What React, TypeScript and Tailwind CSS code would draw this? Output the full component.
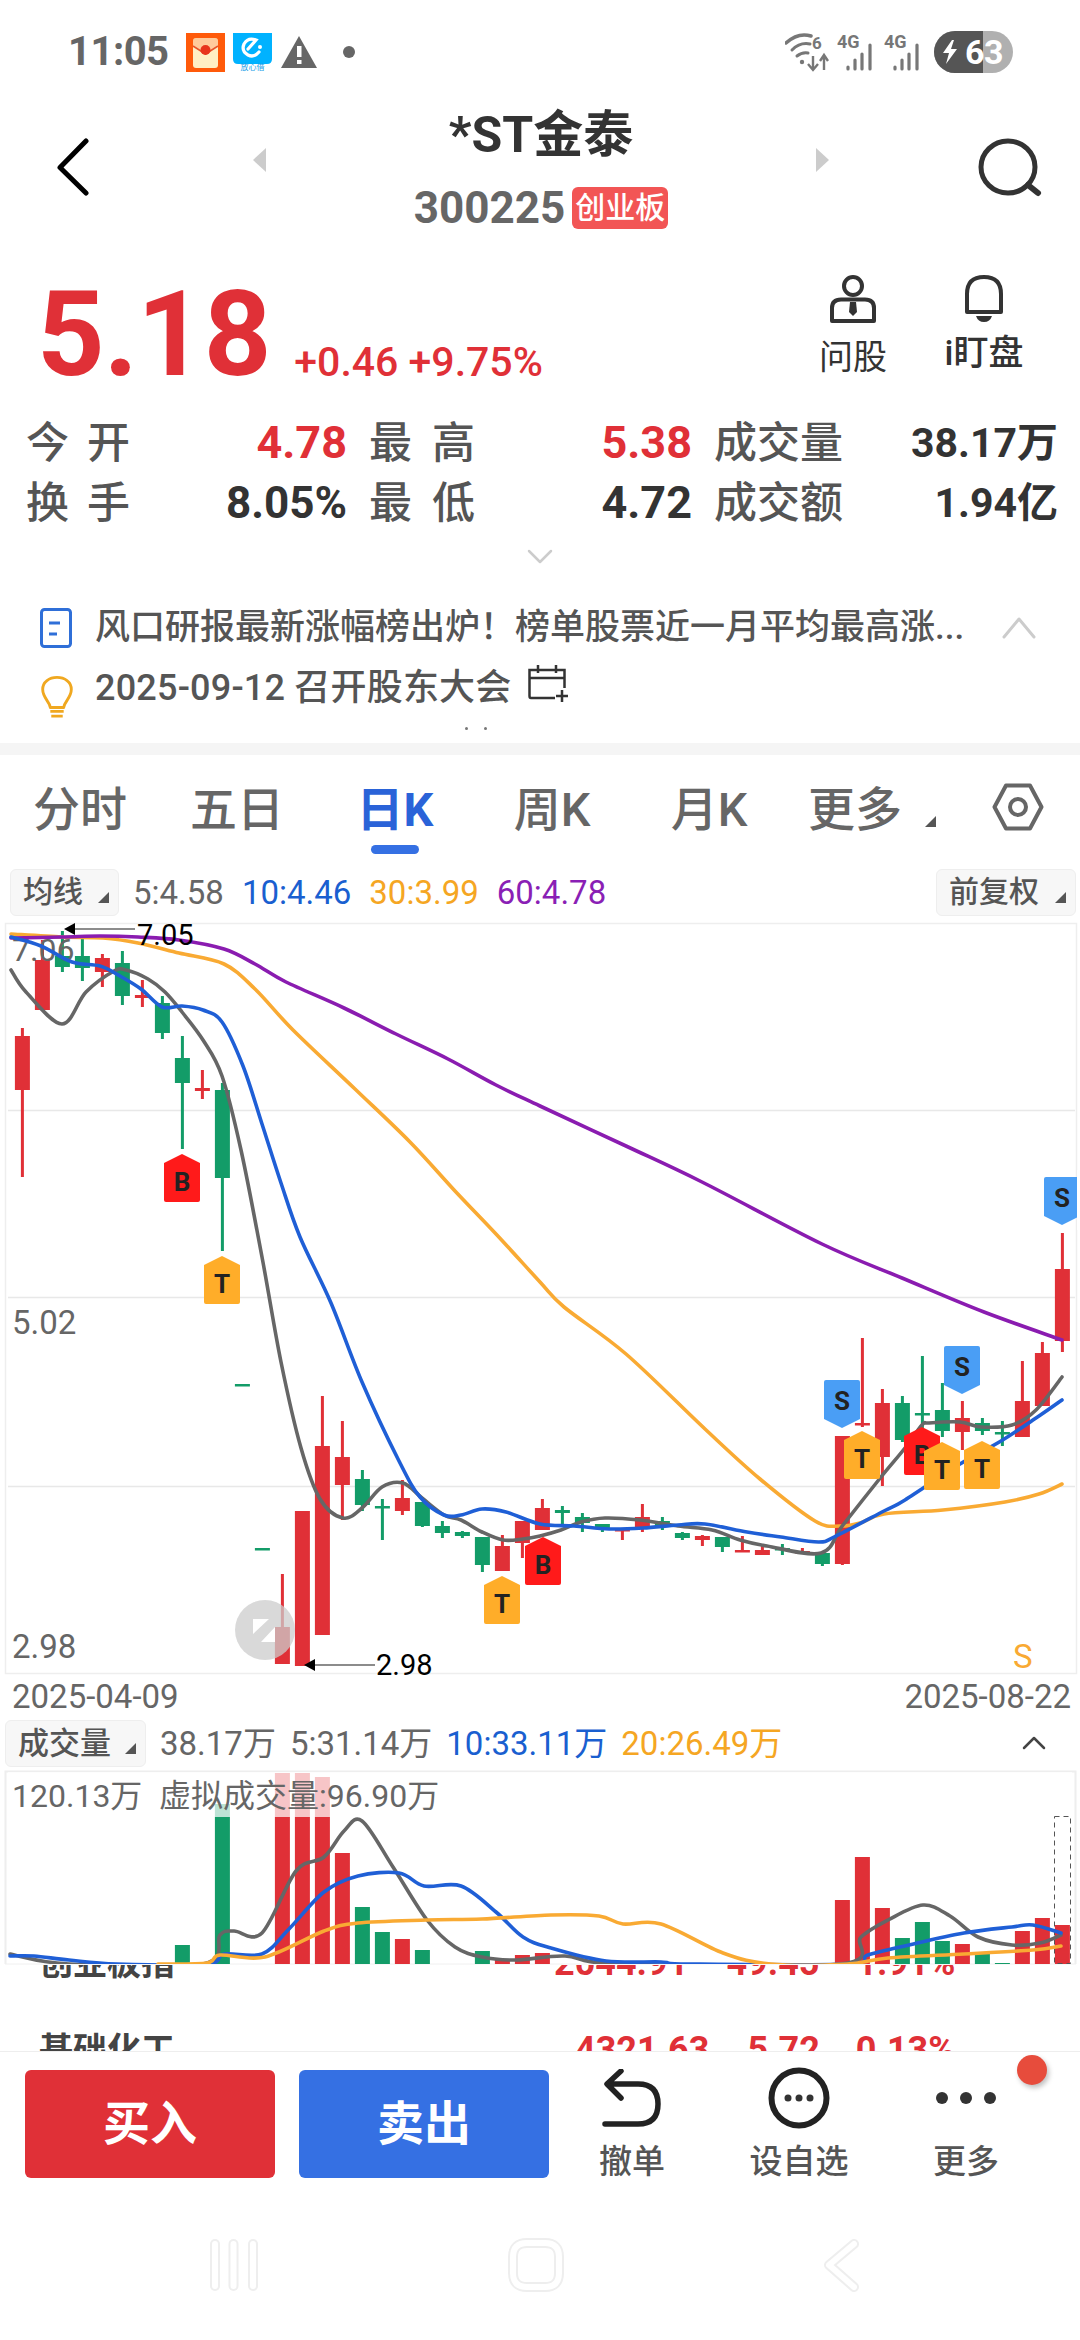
import React from "react";

type Pt = [number, number];
const smooth = (p: Pt[]) => {
  let d = `M${p[0][0]} ${p[0][1]}`;
  for (let i = 0; i < p.length - 1; i++) {
    const a = p[Math.max(i - 1, 0)], b = p[i], c = p[i + 1], e = p[Math.min(i + 2, p.length - 1)];
    const k = 6;
    d += ` C${(b[0] + (c[0] - a[0]) / k).toFixed(1)} ${(b[1] + (c[1] - a[1]) / k).toFixed(1)} ${(c[0] - (e[0] - b[0]) / k).toFixed(1)} ${(c[1] - (e[1] - b[1]) / k).toFixed(1)} ${c[0]} ${c[1]}`;
  }
  return d;
};

const RED = "#e03037", GREEN = "#139c68", BLUE = "#1f5fd6", ORANGE = "#f9aa33", PURPLE = "#8a1cb0", GRAY = "#666666";

const candles: [number, number, number, number, number, string][] = [
  [0, 1028, 1036, 1090, 1177, "r"], [1, 940, 960, 1010, 1010, "r"], [2, 931, 956, 967, 972, "g"], [3, 938, 956, 968, 981, "g"],
  [4, 954, 958, 972, 987, "r"], [5, 951, 963, 996, 1005, "g"], [6, 980, 995, 998, 1007, "r"], [7, 996, 1003, 1033, 1039, "g"],
  [8, 1036, 1058, 1083, 1149, "g"], [9, 1070, 1088, 1091, 1099, "r"], [10, 1083, 1090, 1178, 1251, "g"], [11, 1384, 1384, 1386, 1386, "g"],
  [12, 1548, 1548, 1550, 1550, "g"], [13, 1574, 1627, 1664, 1664, "r"], [14, 1511, 1511, 1666, 1666, "r"], [15, 1396, 1446, 1635, 1635, "r"],
  [16, 1421, 1457, 1485, 1520, "r"], [17, 1470, 1479, 1505, 1511, "g"], [18, 1499, 1506, 1508, 1540, "g"], [19, 1480, 1498, 1511, 1515, "r"],
  [20, 1502, 1502, 1526, 1527, "g"], [21, 1521, 1526, 1533, 1538, "g"], [22, 1531, 1532, 1536, 1538, "g"], [23, 1537, 1537, 1565, 1572, "g"],
  [24, 1535, 1546, 1571, 1571, "r"], [25, 1521, 1521, 1543, 1558, "r"], [26, 1499, 1508, 1530, 1530, "r"], [27, 1506, 1510, 1513, 1525, "g"],
  [28, 1513, 1517, 1523, 1532, "g"], [29, 1524, 1524, 1528, 1532, "g"], [30, 1529, 1529, 1531, 1540, "r"], [31, 1504, 1517, 1528, 1532, "r"],
  [32, 1517, 1521, 1526, 1530, "g"], [33, 1532, 1533, 1538, 1540, "g"], [34, 1535, 1536, 1540, 1546, "r"], [35, 1537, 1537, 1547, 1552, "g"],
  [36, 1536, 1550, 1552, 1552, "r"], [37, 1546, 1550, 1555, 1555, "r"], [38, 1544, 1548, 1550, 1555, "g"], [39, 1548, 1551, 1553, 1553, "r"],
  [40, 1553, 1553, 1564, 1566, "g"], [41, 1436, 1436, 1564, 1565, "r"], [42, 1338, 1423, 1425, 1427, "r"], [43, 1389, 1403, 1457, 1486, "r"],
  [44, 1396, 1403, 1440, 1442, "g"], [45, 1356, 1413, 1415, 1437, "g"], [46, 1383, 1410, 1431, 1437, "g"], [47, 1401, 1418, 1432, 1450, "r"],
  [48, 1418, 1423, 1431, 1435, "g"], [49, 1421, 1432, 1434, 1446, "g"], [50, 1361, 1401, 1437, 1437, "r"], [51, 1342, 1353, 1406, 1406, "r"],
  [52, 1233, 1269, 1341, 1352, "r"],
];

const purple: Pt[] = [[11, 938], [62, 937], [100, 936], [138, 937], [179, 940], [224, 949], [255, 964], [286, 982], [344, 1008], [396, 1034], [448, 1059], [496, 1085], [540, 1106], [626, 1146], [702, 1182], [822, 1244], [902, 1278], [984, 1312], [1062, 1340]];
const orange: Pt[] = [[11, 934], [62, 937], [103, 938], [138, 943], [179, 953], [224, 964], [255, 989], [293, 1030], [355, 1089], [410, 1142], [455, 1191], [496, 1234], [540, 1282], [564, 1307], [626, 1354], [705, 1429], [760, 1479], [815, 1521], [840, 1526], [860, 1523], [884, 1514], [943, 1510], [1005, 1502], [1039, 1494], [1062, 1484]];
const blue: Pt[] = [[11, 937], [41, 946], [72, 962], [100, 966], [120, 976], [141, 989], [162, 1007], [182, 1006], [203, 1010], [222, 1022], [243, 1066], [262, 1124], [281, 1183], [300, 1237], [331, 1303], [362, 1382], [399, 1461], [420, 1497], [444, 1515], [461, 1515], [482, 1509], [506, 1512], [540, 1524], [574, 1526], [609, 1529], [643, 1528], [678, 1525], [705, 1524], [747, 1532], [781, 1537], [819, 1542], [836, 1536], [884, 1511], [905, 1500], [960, 1464], [1001, 1441], [1039, 1416], [1062, 1400]];
const gray: Pt[] = [[11, 970], [26, 992], [62, 1024], [86, 992], [114, 971], [126, 970], [148, 979], [165, 992], [182, 1012], [203, 1040], [222, 1076], [241, 1150], [262, 1257], [281, 1362], [301, 1448], [320, 1499], [343, 1518], [362, 1508], [382, 1487], [403, 1483], [422, 1498], [444, 1515], [461, 1520], [482, 1532], [503, 1540], [523, 1539], [540, 1536], [561, 1530], [581, 1522], [605, 1518], [640, 1520], [678, 1526], [712, 1530], [740, 1540], [767, 1546], [821, 1553], [843, 1525], [881, 1477], [905, 1448], [922, 1425], [929, 1423], [960, 1422], [981, 1427], [1012, 1425], [1036, 1410], [1062, 1377]];

const badges: [string, number, number, string, string][] = [
  ["B", 182, 1154, "#ff1a1a", "up"], ["T", 222, 1256, "#ffad29", "up"], ["T", 502, 1576, "#ffad29", "up"], ["B", 543, 1537, "#ff1a1a", "up"],
  ["S", 842, 1380, "#4a9ef5", "down"], ["T", 862, 1431, "#ffad29", "up"], ["B", 922, 1427, "#ff1a1a", "up"], ["T", 942, 1442, "#ffad29", "up"],
  ["T", 982, 1441, "#ffad29", "up"], ["S", 962, 1346, "#4a9ef5", "down"], ["S", 1062, 1177, "#4a9ef5", "down"],
];

const vol: [number, number, string][] = [
  [8, 1945, "g"], [10, 1804, "g"], [13, 1773, "r"], [14, 1773, "r"], [15, 1777, "r"], [16, 1853, "r"], [17, 1907, "g"], [18, 1932, "g"], [19, 1939, "r"], [20, 1950, "g"],
  [23, 1951, "g"], [24, 1960, "r"], [25, 1955, "r"], [26, 1953, "r"], [41, 1900, "r"], [42, 1857, "r"], [43, 1908, "r"], [44, 1938, "g"], [45, 1922, "g"], [46, 1941, "g"], [47, 1944, "r"], [48, 1954, "g"], [49, 1963, "g"], [50, 1931, "r"], [51, 1918, "r"], [52, 1925, "r"],
];
const vGray: Pt[] = [[10, 1954], [69, 1964], [203, 1964], [220, 1935], [234, 1931], [262, 1933], [296, 1871], [324, 1857], [344, 1831], [362, 1821], [393, 1867], [427, 1920], [455, 1947], [482, 1957], [517, 1960], [565, 1956], [620, 1964], [840, 1964], [861, 1937], [888, 1920], [923, 1905], [950, 1916], [978, 1937], [1012, 1945], [1040, 1943], [1061, 1935]];
const vBlue: Pt[] = [[10, 1956], [34, 1956], [69, 1960], [117, 1964], [207, 1964], [224, 1954], [262, 1954], [289, 1929], [324, 1892], [358, 1876], [399, 1873], [424, 1886], [461, 1886], [496, 1912], [523, 1937], [551, 1948], [606, 1961], [661, 1962], [689, 1964], [847, 1964], [868, 1955], [909, 1945], [964, 1933], [1012, 1927], [1033, 1925], [1061, 1933]];
const vOrange: Pt[] = [[158, 1964], [207, 1963], [220, 1955], [265, 1957], [324, 1931], [358, 1923], [427, 1920], [482, 1919], [551, 1915], [599, 1916], [623, 1924], [661, 1924], [723, 1953], [771, 1964], [847, 1964], [888, 1958], [964, 1954], [1033, 1950], [1061, 1946]];

const Line = ({ p, c, w = 3.6 }: { p: Pt[]; c: string; w?: number }) => (
  <path d={smooth(p)} fill="none" stroke={c} strokeWidth={w} strokeLinejoin="round" strokeLinecap="round" />
);

const Badge = ({ l, x, y, c, dir }: { l: string; x: number; y: number; c: string; dir: string }) => {
  const d = dir === "up"
    ? `M${x} ${y} L${x + 18} ${y + 9} V${y + 46} Q${x + 18} ${y + 48} ${x + 16} ${y + 48} H${x - 16} Q${x - 18} ${y + 48} ${x - 18} ${y + 46} V${y + 9} Z`
    : `M${x - 16} ${y} H${x + 16} Q${x + 18} ${y} ${x + 18} ${y + 2} V${y + 39} L${x} ${y + 48} L${x - 18} ${y + 39} V${y + 2} Q${x - 18} ${y} ${x - 16} ${y} Z`;
  const ty = dir === "up" ? y + 37 : y + 30;
  return (
    <g>
      <path d={d} fill={c} />
      <text x={x} y={ty} textAnchor="middle" fontSize="26" fontWeight="700" fill="#222">{l}</text>
    </g>
  );
};

const MainChart = () => (
  <svg className="block w-[1080px] h-[762px]" viewBox="0 918 1080 762" fontFamily="Roboto, sans-serif">
    <rect x="5.5" y="923.5" width="1071" height="750" fill="#fff" stroke="#eeeeee" strokeWidth="1.5" />
    <path d="M8 1110.5H1075 M8 1297.5H1075 M8 1486.5H1075" stroke="#e8e8e8" strokeWidth="1.5" />
    {candles.map(([i, wt, bt, bb, wb, c]) => {
      const x = 22.4 + 20 * i;
      const col = c === "r" ? RED : GREEN;
      return (
        <g key={i}>
          <rect x={x - 1.5} y={wt} width="3" height={wb - wt} fill={col} />
          <rect x={x - 7.5} y={bt} width="15" height={Math.max(bb - bt, 2.5)} fill={col} />
        </g>
      );
    })}
    <text x="12" y="961" fontSize="32" fill="#666">7.06</text>
    <text x="12" y="1334" fontSize="33" fill="#666">5.02</text>
    <text x="12" y="1658" fontSize="33" fill="#666">2.98</text>
    <Line p={orange} c={ORANGE} />
    <Line p={purple} c={PURPLE} />
    <Line p={gray} c={GRAY} />
    <Line p={blue} c={BLUE} />
    <path d="M64 929 L75 923 V935 Z" fill="#000" />
    <path d="M75 929H135" stroke="#666" strokeWidth="1.5" />
    <text x="137" y="945" fontSize="29" fill="#000">7.05</text>
    <path d="M304 1665 L315 1659 V1671 Z" fill="#000" />
    <path d="M315 1665H375" stroke="#666" strokeWidth="1.5" />
    <text x="376" y="1675" fontSize="29" fill="#000">2.98</text>
    {badges.map(([l, x, y, c, d], i) => (
      <Badge key={i} l={l} x={x} y={y} c={c} dir={d} />
    ))}
    <rect x="1077" y="1170" width="3" height="60" fill="#fff" />
    <text x="1013" y="1668" fontSize="33" fill={ORANGE}>S</text>
    <circle cx="265" cy="1630" r="30" fill="#cccccc" fillOpacity="0.75" />
    <path d="M253 1619 H269 L253 1634 Z M275 1627 V1642 H261 Z" fill="#fff" />
  </svg>
);

const VolumeChart = () => (
  <svg className="block w-[1080px] h-[195px]" viewBox="0 1770 1080 195" fontFamily="Roboto, 'Noto Sans CJK SC', sans-serif">
    <path d="M5.5 1964 V1771.5 H1075.5 V1964" fill="none" stroke="#eeeeee" strokeWidth="2" />
    <path d="M5 1964H1076" stroke="#f0f0f0" strokeWidth="1" />
    {vol.map(([i, t, c]) => (
      <rect key={i} x={22.4 + 20 * i - 7.5} y={t} width="15" height={1964 - t} fill={c === "r" ? RED : GREEN} />
    ))}
    <rect x="8" y="1772" width="1064" height="45" fill="#ffffff" fillOpacity="0.72" />
    <text x="12" y="1807" fontSize="32" fill="#666">120.13万</text>
    <text x="159" y="1807" fontSize="32" fill="#666">虚拟成交量:96.90万</text>
    <rect x="1054.5" y="1816.5" width="16" height="147" fill="none" stroke="#555" strokeWidth="1" strokeDasharray="5 4" />
    <clipPath id="v"><rect x="0" y="1770" width="1080" height="194" /></clipPath>
    <g clipPath="url(#v)">
      <Line p={vGray} c={GRAY} />
      <Line p={vBlue} c={BLUE} />
      <Line p={vOrange} c={ORANGE} />
    </g>
  </svg>
);

const Tri = ({ c = "#444", s = 13 }: { c?: string; s?: number }) => (
  <svg width={s} height={s} viewBox="0 0 13 13" className="shrink-0"><path d="M12 1 V12 H1 Z" fill={c} /></svg>
);

const Chevron = ({ up, w, h, c, sw = 3 }: { up?: boolean; w: number; h: number; c: string; sw?: number }) => (
  <svg width={w} height={h} viewBox={`0 0 ${w} ${h}`} className="block shrink-0">
    <path d={up ? `M2 ${h - 2} L${w / 2} 2 L${w - 2} ${h - 2}` : `M2 2 L${w / 2} ${h - 2} L${w - 2} 2`} fill="none" stroke={c} strokeWidth={sw} strokeLinecap="round" strokeLinejoin="round" />
  </svg>
);

const StatusBar = () => (
  <div className="h-[76px] flex items-center pl-[68px] pr-[67px] pt-[28px] text-[#666]">
    <span className="text-[40px] font-bold leading-none w-[118px] tracking-[-0.5px]">11:05</span>
    <svg width="39" height="39" viewBox="0 0 39 39" className="shrink-0">
      <rect width="39" height="39" fill="#ff5a0a" />
      <rect x="7" y="5" width="25" height="30" rx="3" fill="#ffefc4" />
      <path d="M7 12 L19.5 21 L32 12 V8 Q32 5 29 5 H10 Q7 5 7 8 Z" fill="#ff8a50" fillOpacity="0.35" />
      <path d="M7 13 L19.5 21 L32 13" fill="none" stroke="#e8542a" strokeWidth="1.5" />
      <circle cx="19.5" cy="17" r="5" fill="#e8341c" />
    </svg>
    <div className="ml-[8px] w-[39px] h-[39px] flex flex-col items-center">
      <svg width="39" height="31" viewBox="0 0 39 31" className="block shrink-0">
        <path d="M0 0H39V26Q39 31 34 31H5Q0 31 0 26Z" fill="#00b2ff" />
        <path d="M26 19 Q21 25 15 22 Q8 18 11 11 Q15 4 23 7 L15 16" fill="none" stroke="#fff" strokeWidth="3.2" strokeLinecap="round" />
        <circle cx="27" cy="14" r="2" fill="#fff" />
      </svg>
      <span className="text-[8px] leading-[8px] text-[#1aa0e8]">放心借</span>
    </div>
    <svg width="36" height="32" viewBox="0 0 36 32" className="ml-[9px] shrink-0">
      <path d="M18 0 L36 32 H0 Z" fill="#666" />
      <rect x="16" y="10" width="4.5" height="11" fill="#fff" />
      <rect x="16" y="24" width="4.5" height="4" fill="#fff" />
    </svg>
    <span className="ml-[26px] w-[12px] h-[12px] rounded-full bg-[#666]" />
    <div className="ml-auto flex items-center">
      <svg width="44" height="46" viewBox="0 0 44 46" className="shrink-0" fontFamily="Roboto, sans-serif">
        <path d="M1 14 Q13 3 26 7" fill="none" stroke="#777" strokeWidth="3.5" strokeLinecap="round" />
        <path d="M7 21 Q15 13 25 15" fill="none" stroke="#777" strokeWidth="3" strokeLinecap="round" />
        <path d="M12 27 Q17 23 23 24" fill="none" stroke="#777" strokeWidth="3" strokeLinecap="round" />
        <circle cx="17" cy="33" r="2.2" fill="#777" />
        <text x="27" y="20" fontSize="17" fontWeight="700" fill="#777">6</text>
        <path d="M28 27V40 M23 35 L28 41 L33 35" fill="none" stroke="#777" strokeWidth="2.4" />
        <path d="M39 41V27 M35 32 L39 26 L43 32" fill="none" stroke="#777" strokeWidth="2.4" />
      </svg>
      {[0, 1].map((k) => (
        <svg key={k} width="38" height="46" viewBox="0 0 38 46" className={k === 0 ? "ml-[8px] shrink-0" : "ml-[9px] shrink-0"} fontFamily="Roboto, sans-serif">
          <text x="0" y="19" fontSize="18" fontWeight="700" fill="#777">4G</text>
          <path d="M11 40v-2 M18 40v-9 M25 40v-15 M33 40v-24" stroke="#777" strokeWidth="3.2" strokeLinecap="round" fill="none" />
        </svg>
      ))}
      <div className="ml-[12px] w-[79px] h-[42px] rounded-full overflow-hidden flex bg-[#b0b0b0]">
        <div className="w-[49px] bg-[#555] flex items-center pl-[8px]">
          <svg width="16" height="24" viewBox="0 0 16 24" className="shrink-0"><path d="M10 0 L1 13 H7 L4 24 L15 9 H9 L12 0 Z" fill="#fff" /></svg>
          <span className="ml-[7px] text-[34px] font-bold text-white leading-none">6</span>
        </div>
        <span className="pl-[1px] text-[34px] leading-[42px] font-bold text-white">3</span>
      </div>
    </div>
  </div>
);

const Header = () => (
  <div className="h-[174px] flex items-start">
    <div className="w-[252px] pl-[57px] pt-[62px]">
      <svg width="33" height="58" viewBox="0 0 33 58" className="block"><path d="M29 3 L3 29.5 L29 55" fill="none" stroke="#000" strokeWidth="5" strokeLinecap="round" strokeLinejoin="round" /></svg>
    </div>
    <svg width="15" height="24" viewBox="0 0 15 24" className="shrink-0 mt-[72px]"><path d="M14 0 V24 L1 12 Z" fill="#cccccc" /></svg>
    <div className="flex-1 flex flex-col items-center pt-[31px]">
      <div className="text-[50px] font-bold text-[#333] leading-[56px]">*ST金泰</div>
      <div className="flex items-center mt-[21px]">
        <span className="text-[44px] font-bold text-[#666] leading-[48px]">300225</span>
        <span className="ml-[7px] w-[96px] h-[42px] rounded-[6px] bg-[#f25555] text-white text-[30px] font-medium leading-[42px] text-center">创业板</span>
      </div>
    </div>
    <svg width="15" height="24" viewBox="0 0 15 24" className="shrink-0 mt-[72px]"><path d="M1 0 V24 L14 12 Z" fill="#cccccc" /></svg>
    <div className="w-[250px] pl-[148px] pt-[62px]">
      <svg width="64" height="60" viewBox="0 0 64 60" className="block">
        <ellipse cx="30" cy="29" rx="27" ry="26" fill="none" stroke="#333" strokeWidth="5" />
        <path d="M50 47 L60 55" stroke="#333" strokeWidth="6" strokeLinecap="round" />
      </svg>
    </div>
  </div>
);

const Quote = () => (
  <div className="h-[160px] flex pl-[37px]">
    <div className="flex items-end pb-[16px]">
      <span className="text-[118px] font-bold text-[#e03037] leading-[118px] tracking-[-1px]">5.18</span>
      <span className="ml-[24px] mb-[9px] text-[41px] font-medium text-[#e03037] leading-[46px]">+0.46 +9.75%</span>
    </div>
    <div className="ml-auto flex pr-[57px]">
      <div className="w-[68px] flex flex-col items-center pt-[25px]">
        <svg width="46" height="48" viewBox="0 0 46 48" className="block">
          <circle cx="23" cy="11" r="9" fill="none" stroke="#333" strokeWidth="4" />
          <path d="M2 46 V33 Q2 24.500 11 24.500 H35 Q44 24.500 44 33 V46 Z" fill="none" stroke="#333" strokeWidth="4" strokeLinejoin="round" />
          <path d="M20 27 H26 L27 37 L23 41 L19 37 Z" fill="#333" />
        </svg>
        <span className="text-[34px] text-[#333] leading-[40px] mt-[14px]">问股</span>
      </div>
      <div className="ml-[58px] w-[78px] flex flex-col items-center pt-[25px]">
        <svg width="38" height="47" viewBox="0 0 38 47" className="block">
          <path d="M2 37 V19 Q2 2 19 2 Q36 2 36 19 V37 Z" fill="none" stroke="#333" strokeWidth="4" strokeLinejoin="round" />
          <path d="M11 41 H27 Q25 47 19 47 Q13 47 11 41 Z" fill="#333" />
        </svg>
        <span className="text-[35px] font-medium text-[#333] leading-[40px] mt-[12px] whitespace-nowrap">i盯盘</span>
      </div>
    </div>
  </div>
);

const L = ({ a, b }: { a: string; b?: string }) => (
  b ? <span className="flex justify-between text-[#555]"><span>{a}</span><span>{b}</span></span> : <span className="text-[#555]">{a}</span>
);

const Stats = () => (
  <div className="pl-[26px] pt-[3px] h-[123px] grid grid-cols-[104px_195px_106px_195px_126px_196px] gap-x-[22px] grid-rows-[60px_60px] text-[43px] font-medium leading-[60px] whitespace-nowrap">
    <L a="今" b="开" />
    <span className="text-right text-[#e03037] font-bold text-[45px]">4.78</span>
    <L a="最" b="高" />
    <span className="text-right text-[#e03037] font-bold text-[45px]">5.38</span>
    <L a="成交量" />
    <span className="text-right text-[#333] font-bold text-[41px]">38.17万</span>
    <L a="换" b="手" />
    <span className="text-right text-[#333] font-bold text-[44px]">8.05%</span>
    <L a="最" b="低" />
    <span className="text-right text-[#333] font-bold text-[45px]">4.72</span>
    <L a="成交额" />
    <span className="text-right text-[#333] font-bold text-[41px]">1.94亿</span>
  </div>
);

const News = () => (
  <div className="h-[158px] pl-[40px] pr-[44px] text-[#555] font-medium">
    <div className="flex items-center h-[74px] pt-[12px]">
      <svg width="32" height="40" viewBox="0 0 32 40" className="shrink-0">
        <rect x="1.500" y="1.500" width="29" height="37" rx="3" fill="none" stroke="#2f6fd8" strokeWidth="3" />
        <path d="M9 15H20 M9 26H17" stroke="#2f6fd8" strokeWidth="3" />
      </svg>
      <span className="ml-[23px] text-[35px] leading-[44px] whitespace-nowrap">风口研报最新涨幅榜出炉！榜单股票近一月平均最高涨...</span>
      <div className="ml-auto"><Chevron up w={34} h={22} c="#cccccc" /></div>
    </div>
    <div className="flex items-start h-[56px]">
      <svg width="34" height="42" viewBox="0 0 34 44" className="shrink-0 mt-[17px]">
        <path d="M10 33 C9 26 2 23 2 14 C2 6 9 1.500 17 1.500 C25 1.500 32 6 32 14 C32 23 25 26 24 33 Z" fill="none" stroke="#f0a820" strokeWidth="3" strokeLinejoin="round" />
        <path d="M10 37H24 M11 42H23" stroke="#f0a820" strokeWidth="3" />
      </svg>
      <span className="ml-[21px] text-[36px] leading-[44px] mt-[7px] tracking-[0.2px] whitespace-nowrap">2025-09-12 召开股东大会</span>
      <svg width="40" height="38" viewBox="0 0 40 38" className="ml-[16px] mt-[5px] shrink-0">
        <path d="M27 34 H3 Q1.500 34 1.500 32 V6 H36.500 V24 M1.500 14 H36.500 M10 1V9 M28 1V9" fill="none" stroke="#333" strokeWidth="2.500" />
        <path d="M34 26V38 M28 32H40" stroke="#333" strokeWidth="2.500" />
      </svg>
    </div>
    <div className="flex ml-[425px] mt-[12px] gap-[16px]">
      <span className="w-[3px] h-[3px] rounded-full bg-[#777]" />
      <span className="w-[3px] h-[3px] rounded-full bg-[#777]" />
    </div>
  </div>
);

const Tab = ({ t, w, active }: { t: string; w: string; active?: boolean }) => (
  <div className={`flex flex-col items-center whitespace-nowrap ${w}`}>
    <span className={active ? "text-[#2a63d8] font-bold" : "text-[#666] font-medium"}>{t}</span>
    {active && <span className="mt-[7px] w-[48px] h-[9px] rounded-full bg-[#3570e3]" />}
  </div>
);

const Tabs = () => (
  <div className="h-[105px] pt-[27px] pl-[33px] flex text-[47px] leading-[56px]">
    <div className="flex w-[959px]">
      <Tab t="分时" w="w-[94px]" />
      <Tab t="五日" w="ml-[63px] w-[94px]" />
      <Tab t="日K" w="ml-[73px] w-[76px]" active />
      <Tab t="周K" w="ml-[80px] w-[78px]" />
      <Tab t="月K" w="ml-[79px] w-[78px]" />
      <div className="ml-[60px] flex items-start text-[#666] font-medium">
        <span>更多</span>
        <span className="mt-[33px] ml-[22px]"><Tri c="#555" /></span>
      </div>
    </div>
    <svg width="52" height="48" viewBox="0 0 52 48" className="shrink-0 mt-[1px]">
      <path d="M14 2.500 H38 L49.500 24 L38 45.500 H14 L2.500 24 Z" fill="none" stroke="#666" strokeWidth="4" strokeLinejoin="round" />
      <circle cx="26" cy="24" r="8" fill="none" stroke="#666" strokeWidth="4" />
    </svg>
  </div>
);

const Pill = ({ t, w }: { t: string; w: string }) => (
  <div className={`${w} h-[47px] bg-[#f7f7f7] border border-[#eeeeee] rounded-[6px] flex items-center justify-between pl-[12px] pr-[8px] text-[30px] text-[#555]`}>
    <span className="leading-none font-medium">{t}</span>
    <span className="mt-[10px]"><Tri c="#555" /></span>
  </div>
);

const MaRow = () => (
  <div className="h-[58px] flex items-center pl-[10px] pr-[4px] pt-[6px] text-[33px] leading-none">
    <Pill t="均线" w="w-[109px]" />
    <span className="ml-[14px] text-[#666]">5:4.58</span>
    <span className="ml-[18px] text-[#1a5fd0]">10:4.46</span>
    <span className="ml-[18px] text-[#f5a623]">30:3.99</span>
    <span className="ml-[18px] text-[#8a1fb5]">60:4.78</span>
    <div className="ml-auto"><Pill t="前复权" w="w-[140px]" /></div>
  </div>
);

const Row = ({ n, a, b, c, x1, x2, x3 }: { n: string; a: string; b: string; c: string; x1: string; x2: string; x3: string }) => (
  <div className="h-[87px] flex items-center pl-[39px] text-[36px] font-bold text-[#e03037] leading-none">
    <span className="w-[140px] text-[34px] text-[#444]">{n}</span>
    <span className={x1}>{a}</span>
    <span className={x2}>{b}</span>
    <span className={x3}>{c}</span>
  </div>
);

const ActionBtn = ({ t, w, children }: { t: string; w: string; children: React.ReactNode }) => (
  <div className={`flex flex-col items-center ${w}`}>
    <div className="h-[62px] flex items-center">{children}</div>
    <span className="mt-[13px] text-[33px] leading-[40px] text-[#555] font-medium whitespace-nowrap">{t}</span>
  </div>
);

const Footer = () => (
  <div className="relative h-[149px] border-t border-[#eeeeee] bg-white flex pl-[25px] pt-[18px]">
    <div className="w-[250px] h-[108px] rounded-[6px] bg-[#e03037] text-white text-[47px] font-bold flex items-center justify-center">买入</div>
    <div className="ml-[24px] w-[250px] h-[108px] rounded-[6px] bg-[#3570e3] text-white text-[47px] font-bold flex items-center justify-center">卖出</div>
    <div className="flex ml-[26px] mt-[-3px]">
      <ActionBtn t="撤单" w="w-[114px]">
        <svg width="60" height="58" viewBox="0 0 60 58" className="block">
          <path d="M19 2 L5 15 L19 29 M6 15 H36 Q56 15 56 35 Q56 55 36 55 H3" fill="none" stroke="#222" strokeWidth="5.500" strokeLinecap="round" strokeLinejoin="round" />
        </svg>
      </ActionBtn>
      <ActionBtn t="设自选" w="ml-[54px] w-[112px]">
        <svg width="62" height="62" viewBox="0 0 62 62" className="block">
          <circle cx="31" cy="31" r="27.500" fill="none" stroke="#222" strokeWidth="6" />
          <circle cx="20" cy="31" r="3.500" fill="#333" /><circle cx="31" cy="31" r="3.500" fill="#333" /><circle cx="42" cy="31" r="3.500" fill="#333" />
        </svg>
      </ActionBtn>
      <ActionBtn t="更多" w="ml-[55px] w-[112px]">
        <svg width="62" height="14" viewBox="0 0 62 14" className="block">
          <circle cx="7" cy="7" r="6" fill="#333" /><circle cx="31" cy="7" r="6" fill="#333" /><circle cx="55" cy="7" r="6" fill="#333" />
        </svg>
      </ActionBtn>
    </div>
    <span className="absolute left-[1017px] top-[3px] w-[30px] h-[30px] rounded-full bg-[#e74c3c] shadow-[2px_3px_5px_rgba(0,0,0,0.25)]" />
  </div>
);

const Outline = ({ d }: { d: string }) => (
  <>
    <path d={d} fill="none" stroke="#eeeeee" strokeWidth="10" strokeLinecap="round" strokeLinejoin="round" />
    <path d={d} fill="none" stroke="#ffffff" strokeWidth="6" strokeLinecap="round" strokeLinejoin="round" />
  </>
);

const NavBar = () => (
  <div className="h-[140px] flex items-start pt-[38px]">
    <svg width="50" height="54" viewBox="0 0 50 54" className="ml-[209px] shrink-0">
      <Outline d="M6 6V48" /><Outline d="M24.500 6V48" /><Outline d="M44 6V48" />
    </svg>
    <svg width="56" height="54" viewBox="0 0 56 54" className="ml-[249px] shrink-0">
      <Outline d="M19 5 H37 Q51 5 51 19 V35 Q51 49 37 49 H19 Q5 49 5 35 V19 Q5 5 19 5 Z" />
    </svg>
    <svg width="40" height="54" viewBox="0 0 40 54" className="ml-[257px] shrink-0">
      <Outline d="M33 6 L8 27 L33 49" />
    </svg>
  </div>
);

export default function App() {
  return (
    <div className="w-[1080px] h-[2340px] bg-white overflow-hidden flex flex-col [font-family:Roboto,'Noto_Sans_CJK_SC',sans-serif]">
      <StatusBar />
      <Header />
      <Quote />
      <Stats />
      <div className="h-[52px] flex flex-col items-center">
        <div className="mt-[16px]"><Chevron w={26} h={15} c="#cccccc" sw={2.500} /></div>
        <div className="mt-[21px] w-[1009px] h-[1px] bg-[#eeeeee]" />
      </div>
      <News />
      <div className="h-[12px] bg-[#f5f5f5]" />
      <Tabs />
      <MaRow />
      <MainChart />
      <div className="h-[36px] flex justify-between pl-[12px] pr-[9px] pt-[2px] text-[33px] leading-[30px] text-[#666]">
        <span>2025-04-09</span>
        <span>2025-08-22</span>
      </div>
      <div className="h-[54px] flex items-center pl-[5px] pr-[34px] text-[33px] leading-none whitespace-nowrap">
        <div className="w-[141px] h-[47px] bg-[#f7f7f7] border border-[#eeeeee] rounded-[6px] flex items-center justify-between pl-[12px] pr-[8px] text-[31px] text-[#555]">
          <span className="font-medium">成交量</span>
          <span className="mt-[10px]"><Tri c="#555" /></span>
        </div>
        <span className="ml-[14px] text-[#666]">38.17万</span>
        <span className="ml-[14px] text-[#666]">5:31.14万</span>
        <span className="ml-[14px] text-[#1a5fd0]">10:33.11万</span>
        <span className="ml-[14px] text-[#f5a623]">20:26.49万</span>
        <div className="ml-auto"><Chevron up w={24} h={14} c="#444" sw={2.500} /></div>
      </div>
      <VolumeChart />
      <div className="h-[86px] overflow-hidden bg-white">
        <div className="mt-[-46px]">
          <Row n="创业板指" a="2044.91" b="49.45" c="1.91%" x1="ml-[375px]" x2="ml-[38px]" x3="ml-[37px]" />
          <Row n="基础化工" a="4321.63" b="5.72" c="0.13%" x1="ml-[396px]" x2="ml-[38px]" x3="ml-[36px]" />
        </div>
      </div>
      <Footer />
      <NavBar />
    </div>
  );
}
